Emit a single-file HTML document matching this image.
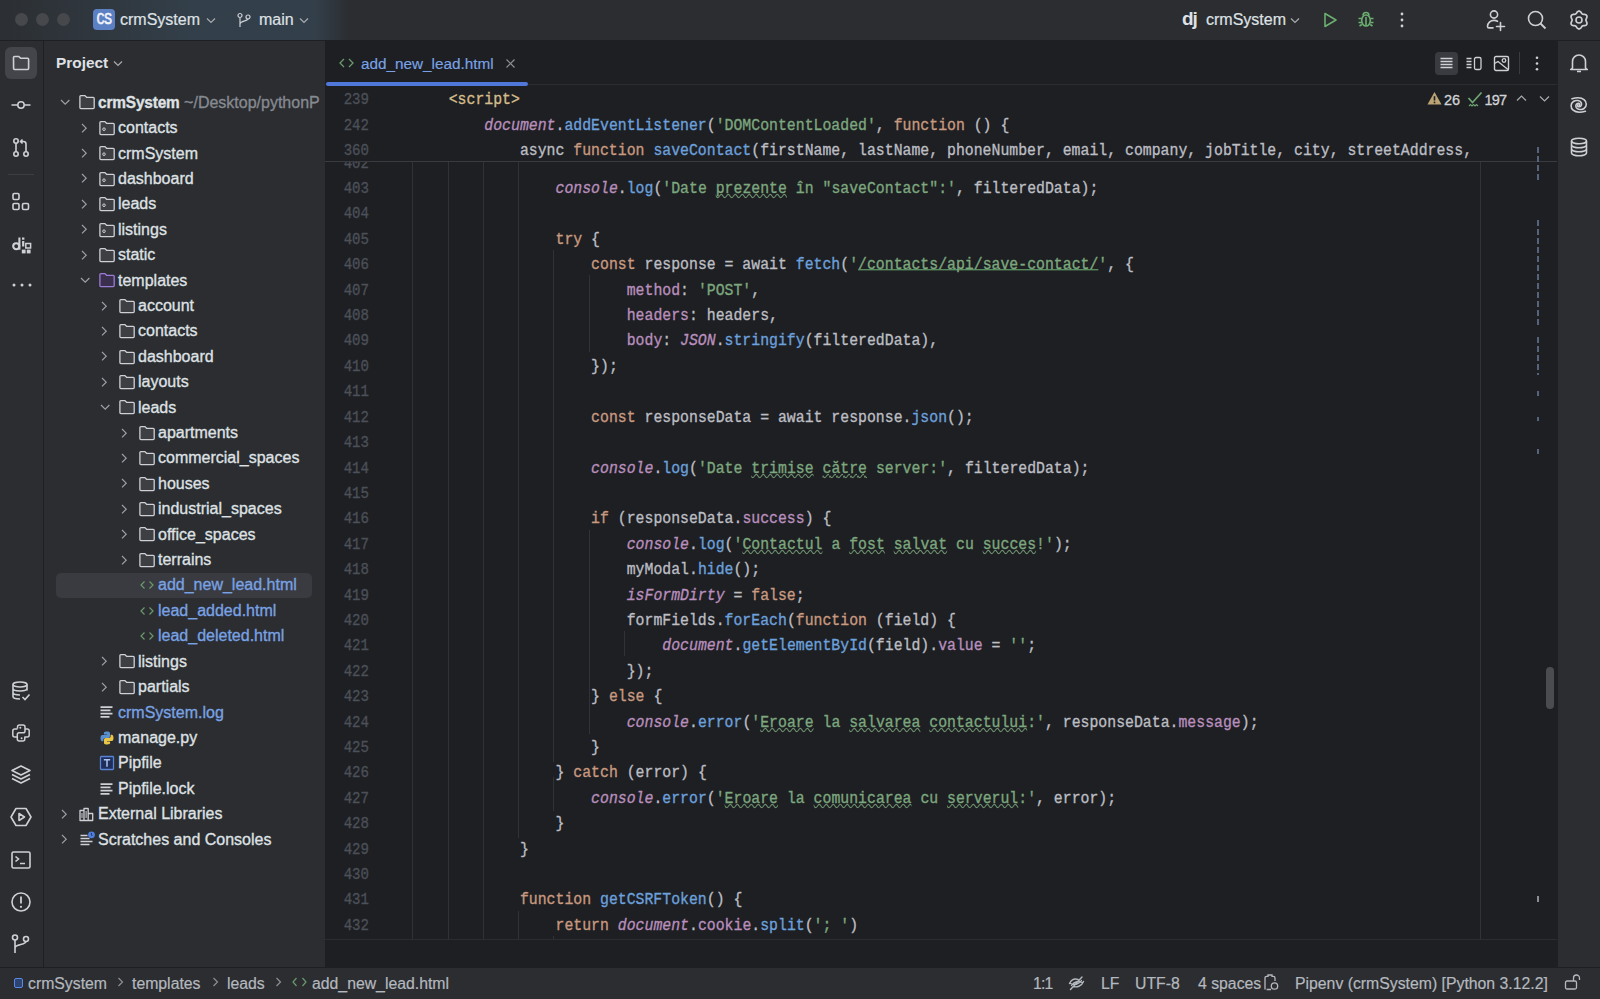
<!DOCTYPE html>
<html><head><meta charset="utf-8">
<style>
*{box-sizing:border-box;margin:0;padding:0}
html,body{width:1600px;height:999px;overflow:hidden;background:#2B2D30}
body{position:relative;font-family:"Liberation Sans",sans-serif;color:#DFE1E5}
.abs{position:absolute}
svg{overflow:visible}
.tt{-webkit-text-stroke:0.2px currentColor}
#title{left:0;top:0;width:1600px;height:41px;background:#2B2D30;border-bottom:1px solid #1E1F22}
#titlegrad{left:0;top:0;width:360px;height:40px;background:linear-gradient(90deg, rgba(58,80,98,0.05) 0px, rgba(58,80,98,0.5) 190px, rgba(58,80,98,0.52) 315px, rgba(58,80,98,0.0) 350px)}
#lstrip{left:0;top:41px;width:44px;height:926px;background:#2B2D30;border-right:1px solid #1E1F22}
#proj{left:44px;top:41px;width:281px;height:926px;background:#2B2D30}
#editor{left:325px;top:41px;width:1232px;height:926px;background:#1E1F22}
#rstrip{left:1557px;top:41px;width:43px;height:926px;background:#2B2D30;border-left:1px solid #1E1F22}
#status{left:0;top:967px;width:1600px;height:32px;background:#2B2D30;border-top:1px solid #1E1F22}
.code{font-family:"Liberation Mono",monospace;font-size:14.83px;white-space:pre;color:#BCBEC4;line-height:25.41px;height:25.41px;-webkit-text-stroke:0.3px currentColor;transform:scaleY(1.07);transform-origin:0 50%}
.ln{font-family:"Liberation Mono",monospace;font-size:14.83px;color:#4B5059;position:absolute;width:40px;text-align:right;line-height:25.41px;-webkit-text-stroke:0.3px currentColor;transform:scale(0.95,1.07);transform-origin:100% 50%}
.k{color:#C99A80}.s{color:#7DA87F}.f{color:#6CA1DE}.p{color:#B98FBE}.g{color:#B98FBE;font-style:italic}.t{color:#D4BD8C}
.sq{text-decoration:underline wavy #6E9270;text-decoration-thickness:1px;text-underline-offset:-0.4px;text-decoration-skip-ink:none}
.ul{text-decoration:underline;text-decoration-color:#6AAB73;text-underline-offset:0px;text-decoration-skip-ink:none}
.tr{position:absolute;font-size:16px;line-height:25.41px;white-space:nowrap;color:#DFE1E5;-webkit-text-stroke:0.32px currentColor;transform:scaleY(1.08);transform-origin:0 60%}
.tr b{font-size:15.4px;letter-spacing:-0.15px}
.guide{position:absolute;width:1px;background:#303236}
</style></head><body>
<div id="title" class="abs"></div>
<div id="titlegrad" class="abs"></div>
<div id="lstrip" class="abs"></div>
<div id="proj" class="abs"></div>
<div id="editor" class="abs"></div>
<div id="rstrip" class="abs"></div>
<div id="status" class="abs"></div>
<div class="abs" style="left:325px;top:86px;width:1232px;height:853px;overflow:hidden">
<div class="guide" style="left:87.0px;top:76px;height:777px"></div>
<div class="guide" style="left:122.5px;top:76px;height:777px"></div>
<div class="guide" style="left:158.2px;top:76px;height:777px"></div>
<div class="guide" style="left:192.6px;top:76px;height:676px"></div>
<div class="guide" style="left:192.6px;top:825px;height:28px"></div>
<div class="guide" style="left:228.2px;top:164px;height:512px"></div>
<div class="guide" style="left:228.2px;top:691px;height:34px"></div>
<div class="guide" style="left:263.8px;top:189px;height:77px"></div>
<div class="guide" style="left:263.8px;top:444px;height:204px"></div>
<div class="guide" style="left:299.4px;top:545px;height:25px"></div>
<div class="guide" style="left:228.2px;top:850px;height:3px"></div>
<div class="guide" style="left:1155px;top:76px;height:777px;background:#313336"></div>
<div class="ln" style="left:4px;top:65.59px">402</div>
<div class="ln" style="left:4px;top:91.00px">403</div>
<div class="code abs" style="left:230.50px;top:91.00px"><span class="g">console</span>.<span class="f">log</span>(<span class="s">&#x27;Date <span class="sq">prezente</span> în &quot;saveContact&quot;:&#x27;</span>, filteredData);</div>
<div class="ln" style="left:4px;top:116.41px">404</div>
<div class="ln" style="left:4px;top:141.82px">405</div>
<div class="code abs" style="left:230.50px;top:141.82px"><span class="k">try</span> {</div>
<div class="ln" style="left:4px;top:167.23px">406</div>
<div class="code abs" style="left:266.10px;top:167.23px"><span class="k">const</span> response = await <span class="f">fetch</span>(<span class="s">&#x27;<span class="ul">/contacts/api/save-contact/</span>&#x27;</span>, {</div>
<div class="ln" style="left:4px;top:192.64px">407</div>
<div class="code abs" style="left:301.70px;top:192.64px"><span class="p">method</span>: <span class="s">&#x27;POST&#x27;</span>,</div>
<div class="ln" style="left:4px;top:218.05px">408</div>
<div class="code abs" style="left:301.70px;top:218.05px"><span class="p">headers</span>: headers,</div>
<div class="ln" style="left:4px;top:243.46px">409</div>
<div class="code abs" style="left:301.70px;top:243.46px"><span class="p">body</span>: <span class="g">JSON</span>.<span class="f">stringify</span>(filteredData),</div>
<div class="ln" style="left:4px;top:268.87px">410</div>
<div class="code abs" style="left:266.10px;top:268.87px">});</div>
<div class="ln" style="left:4px;top:294.28px">411</div>
<div class="ln" style="left:4px;top:319.69px">412</div>
<div class="code abs" style="left:266.10px;top:319.69px"><span class="k">const</span> responseData = await response.<span class="f">json</span>();</div>
<div class="ln" style="left:4px;top:345.10px">413</div>
<div class="ln" style="left:4px;top:370.51px">414</div>
<div class="code abs" style="left:266.10px;top:370.51px"><span class="g">console</span>.<span class="f">log</span>(<span class="s">&#x27;Date <span class="sq">trimise</span> <span class="sq">către</span> server:&#x27;</span>, filteredData);</div>
<div class="ln" style="left:4px;top:395.92px">415</div>
<div class="ln" style="left:4px;top:421.33px">416</div>
<div class="code abs" style="left:266.10px;top:421.33px"><span class="k">if</span> (responseData.<span class="p">success</span>) {</div>
<div class="ln" style="left:4px;top:446.74px">417</div>
<div class="code abs" style="left:301.70px;top:446.74px"><span class="g">console</span>.<span class="f">log</span>(<span class="s">&#x27;<span class="sq">Contactul</span> a <span class="sq">fost</span> <span class="sq">salvat</span> cu <span class="sq">succes</span>!&#x27;</span>);</div>
<div class="ln" style="left:4px;top:472.15px">418</div>
<div class="code abs" style="left:301.70px;top:472.15px">myModal.<span class="f">hide</span>();</div>
<div class="ln" style="left:4px;top:497.56px">419</div>
<div class="code abs" style="left:301.70px;top:497.56px"><span class="g">isFormDirty</span> = <span class="k">false</span>;</div>
<div class="ln" style="left:4px;top:522.97px">420</div>
<div class="code abs" style="left:301.70px;top:522.97px">formFields.<span class="f">forEach</span>(<span class="k">function</span> (field) {</div>
<div class="ln" style="left:4px;top:548.38px">421</div>
<div class="code abs" style="left:337.30px;top:548.38px"><span class="g">document</span>.<span class="f">getElementById</span>(field).<span class="p">value</span> = <span class="s">&#x27;&#x27;</span>;</div>
<div class="ln" style="left:4px;top:573.79px">422</div>
<div class="code abs" style="left:301.70px;top:573.79px">});</div>
<div class="ln" style="left:4px;top:599.20px">423</div>
<div class="code abs" style="left:266.10px;top:599.20px">} <span class="k">else</span> {</div>
<div class="ln" style="left:4px;top:624.61px">424</div>
<div class="code abs" style="left:301.70px;top:624.61px"><span class="g">console</span>.<span class="f">error</span>(<span class="s">&#x27;<span class="sq">Eroare</span> la <span class="sq">salvarea</span> <span class="sq">contactului</span>:&#x27;</span>, responseData.<span class="p">message</span>);</div>
<div class="ln" style="left:4px;top:650.02px">425</div>
<div class="code abs" style="left:266.10px;top:650.02px">}</div>
<div class="ln" style="left:4px;top:675.43px">426</div>
<div class="code abs" style="left:230.50px;top:675.43px">} <span class="k">catch</span> (error) {</div>
<div class="ln" style="left:4px;top:700.84px">427</div>
<div class="code abs" style="left:266.10px;top:700.84px"><span class="g">console</span>.<span class="f">error</span>(<span class="s">&#x27;<span class="sq">Eroare</span> la <span class="sq">comunicarea</span> cu <span class="sq">serverul</span>:&#x27;</span>, error);</div>
<div class="ln" style="left:4px;top:726.25px">428</div>
<div class="code abs" style="left:230.50px;top:726.25px">}</div>
<div class="ln" style="left:4px;top:751.66px">429</div>
<div class="code abs" style="left:194.90px;top:751.66px">}</div>
<div class="ln" style="left:4px;top:777.07px">430</div>
<div class="ln" style="left:4px;top:802.48px">431</div>
<div class="code abs" style="left:194.90px;top:802.48px"><span class="k">function</span> <span class="f">getCSRFToken</span>() {</div>
<div class="ln" style="left:4px;top:827.89px">432</div>
<div class="code abs" style="left:230.50px;top:827.89px"><span class="k">return</span> <span class="g">document</span>.<span class="p">cookie</span>.<span class="f">split</span>(<span class="s">&#x27;; &#x27;</span>)</div>
<div class="ln" style="left:4px;top:853.30px">433</div>
<div class="abs" style="left:0;top:0;width:1232px;height:76px;background:#1E1F22;border-bottom:1px solid #393B40"></div>
<div class="ln" style="left:4px;top:2.20px">239</div>
<div class="code abs" style="left:123.70px;top:2.20px"><span class="t">&lt;script&gt;</span></div>
<div class="ln" style="left:4px;top:27.61px">242</div>
<div class="code abs" style="left:159.30px;top:27.61px"><span class="g">document</span>.<span class="f">addEventListener</span>(<span class="s">&#x27;DOMContentLoaded&#x27;</span>, <span class="k">function</span> () {</div>
<div class="ln" style="left:4px;top:53.02px">360</div>
<div class="code abs" style="left:194.90px;top:53.02px">async <span class="k">function</span> <span class="f">saveContact</span>(firstName, lastName, phoneNumber, email, company, jobTitle, city, streetAddress,</div>
</div>
<div class="abs" style="left:56px;top:572.5px;width:256px;height:25px;border-radius:5px;background:#393B40"></div>
<svg class="abs" style="left:59.5px;top:98.9px" width="11" height="7" viewBox="0 0 11 7"><path d="M1 1l4.2 4.2L9.4 1" fill="none" stroke="#9DA0A8" stroke-width="1.2"/></svg>
<svg class="abs" style="left:79px;top:94.4px" width="16" height="16" viewBox="0 0 16 16"><path d="M0.9 2.6c0-.6.4-1 1-1h4l1.7 1.7h6.6c.6 0 1 .4 1 1v9.3c0 .6-.4 1-1 1H1.9c-.6 0-1-.4-1-1z" fill="#3D3F43" stroke="#CED0D6" stroke-width="1.3"/></svg>
<div class="tr" style="left:98px;top:89.70px"><b>crmSystem</b><span style="color:#868A91"> ~/Desktop/pythonP</span></div>
<svg class="abs" style="left:81px;top:122.6px" width="7" height="11" viewBox="0 0 7 11"><path d="M1 1l4.2 4.2L1 9.4" fill="none" stroke="#9DA0A8" stroke-width="1.2"/></svg>
<svg class="abs" style="left:99px;top:119.8px" width="16" height="16" viewBox="0 0 16 16"><path d="M0.9 2.6c0-.6.4-1 1-1h4l1.7 1.7h6.6c.6 0 1 .4 1 1v9.3c0 .6-.4 1-1 1H1.9c-.6 0-1-.4-1-1z" fill="#3D3F43" stroke="#CED0D6" stroke-width="1.3"/><circle cx="5" cy="9.2" r="1.3" fill="none" stroke="#CED0D6" stroke-width="1"/></svg>
<div class="tr" style="left:118px;top:115.11px">contacts</div>
<svg class="abs" style="left:81px;top:148.0px" width="7" height="11" viewBox="0 0 7 11"><path d="M1 1l4.2 4.2L1 9.4" fill="none" stroke="#9DA0A8" stroke-width="1.2"/></svg>
<svg class="abs" style="left:99px;top:145.2px" width="16" height="16" viewBox="0 0 16 16"><path d="M0.9 2.6c0-.6.4-1 1-1h4l1.7 1.7h6.6c.6 0 1 .4 1 1v9.3c0 .6-.4 1-1 1H1.9c-.6 0-1-.4-1-1z" fill="#3D3F43" stroke="#CED0D6" stroke-width="1.3"/><circle cx="5" cy="9.2" r="1.3" fill="none" stroke="#CED0D6" stroke-width="1"/></svg>
<div class="tr" style="left:118px;top:140.52px">crmSystem</div>
<svg class="abs" style="left:81px;top:173.4px" width="7" height="11" viewBox="0 0 7 11"><path d="M1 1l4.2 4.2L1 9.4" fill="none" stroke="#9DA0A8" stroke-width="1.2"/></svg>
<svg class="abs" style="left:99px;top:170.6px" width="16" height="16" viewBox="0 0 16 16"><path d="M0.9 2.6c0-.6.4-1 1-1h4l1.7 1.7h6.6c.6 0 1 .4 1 1v9.3c0 .6-.4 1-1 1H1.9c-.6 0-1-.4-1-1z" fill="#3D3F43" stroke="#CED0D6" stroke-width="1.3"/><circle cx="5" cy="9.2" r="1.3" fill="none" stroke="#CED0D6" stroke-width="1"/></svg>
<div class="tr" style="left:118px;top:165.93px">dashboard</div>
<svg class="abs" style="left:81px;top:198.8px" width="7" height="11" viewBox="0 0 7 11"><path d="M1 1l4.2 4.2L1 9.4" fill="none" stroke="#9DA0A8" stroke-width="1.2"/></svg>
<svg class="abs" style="left:99px;top:196.0px" width="16" height="16" viewBox="0 0 16 16"><path d="M0.9 2.6c0-.6.4-1 1-1h4l1.7 1.7h6.6c.6 0 1 .4 1 1v9.3c0 .6-.4 1-1 1H1.9c-.6 0-1-.4-1-1z" fill="#3D3F43" stroke="#CED0D6" stroke-width="1.3"/><circle cx="5" cy="9.2" r="1.3" fill="none" stroke="#CED0D6" stroke-width="1"/></svg>
<div class="tr" style="left:118px;top:191.34px">leads</div>
<svg class="abs" style="left:81px;top:224.3px" width="7" height="11" viewBox="0 0 7 11"><path d="M1 1l4.2 4.2L1 9.4" fill="none" stroke="#9DA0A8" stroke-width="1.2"/></svg>
<svg class="abs" style="left:99px;top:221.5px" width="16" height="16" viewBox="0 0 16 16"><path d="M0.9 2.6c0-.6.4-1 1-1h4l1.7 1.7h6.6c.6 0 1 .4 1 1v9.3c0 .6-.4 1-1 1H1.9c-.6 0-1-.4-1-1z" fill="#3D3F43" stroke="#CED0D6" stroke-width="1.3"/><circle cx="5" cy="9.2" r="1.3" fill="none" stroke="#CED0D6" stroke-width="1"/></svg>
<div class="tr" style="left:118px;top:216.75px">listings</div>
<svg class="abs" style="left:81px;top:249.7px" width="7" height="11" viewBox="0 0 7 11"><path d="M1 1l4.2 4.2L1 9.4" fill="none" stroke="#9DA0A8" stroke-width="1.2"/></svg>
<svg class="abs" style="left:99px;top:246.9px" width="16" height="16" viewBox="0 0 16 16"><path d="M0.9 2.6c0-.6.4-1 1-1h4l1.7 1.7h6.6c.6 0 1 .4 1 1v9.3c0 .6-.4 1-1 1H1.9c-.6 0-1-.4-1-1z" fill="#3D3F43" stroke="#CED0D6" stroke-width="1.3"/></svg>
<div class="tr" style="left:118px;top:242.16px">static</div>
<svg class="abs" style="left:79.5px;top:276.8px" width="11" height="7" viewBox="0 0 11 7"><path d="M1 1l4.2 4.2L9.4 1" fill="none" stroke="#9DA0A8" stroke-width="1.2"/></svg>
<svg class="abs" style="left:99px;top:272.3px" width="16" height="16" viewBox="0 0 16 16"><path d="M0.9 2.6c0-.6.4-1 1-1h4l1.7 1.7h6.6c.6 0 1 .4 1 1v9.3c0 .6-.4 1-1 1H1.9c-.6 0-1-.4-1-1z" fill="#3A2F4D" stroke="#9D7BD8" stroke-width="1.3"/></svg>
<div class="tr" style="left:118px;top:267.57px">templates</div>
<svg class="abs" style="left:101px;top:300.5px" width="7" height="11" viewBox="0 0 7 11"><path d="M1 1l4.2 4.2L1 9.4" fill="none" stroke="#9DA0A8" stroke-width="1.2"/></svg>
<svg class="abs" style="left:119px;top:297.7px" width="16" height="16" viewBox="0 0 16 16"><path d="M0.9 2.6c0-.6.4-1 1-1h4l1.7 1.7h6.6c.6 0 1 .4 1 1v9.3c0 .6-.4 1-1 1H1.9c-.6 0-1-.4-1-1z" fill="#3D3F43" stroke="#CED0D6" stroke-width="1.3"/></svg>
<div class="tr" style="left:138px;top:292.98px">account</div>
<svg class="abs" style="left:101px;top:325.9px" width="7" height="11" viewBox="0 0 7 11"><path d="M1 1l4.2 4.2L1 9.4" fill="none" stroke="#9DA0A8" stroke-width="1.2"/></svg>
<svg class="abs" style="left:119px;top:323.1px" width="16" height="16" viewBox="0 0 16 16"><path d="M0.9 2.6c0-.6.4-1 1-1h4l1.7 1.7h6.6c.6 0 1 .4 1 1v9.3c0 .6-.4 1-1 1H1.9c-.6 0-1-.4-1-1z" fill="#3D3F43" stroke="#CED0D6" stroke-width="1.3"/></svg>
<div class="tr" style="left:138px;top:318.39px">contacts</div>
<svg class="abs" style="left:101px;top:351.3px" width="7" height="11" viewBox="0 0 7 11"><path d="M1 1l4.2 4.2L1 9.4" fill="none" stroke="#9DA0A8" stroke-width="1.2"/></svg>
<svg class="abs" style="left:119px;top:348.5px" width="16" height="16" viewBox="0 0 16 16"><path d="M0.9 2.6c0-.6.4-1 1-1h4l1.7 1.7h6.6c.6 0 1 .4 1 1v9.3c0 .6-.4 1-1 1H1.9c-.6 0-1-.4-1-1z" fill="#3D3F43" stroke="#CED0D6" stroke-width="1.3"/></svg>
<div class="tr" style="left:138px;top:343.80px">dashboard</div>
<svg class="abs" style="left:101px;top:376.7px" width="7" height="11" viewBox="0 0 7 11"><path d="M1 1l4.2 4.2L1 9.4" fill="none" stroke="#9DA0A8" stroke-width="1.2"/></svg>
<svg class="abs" style="left:119px;top:373.9px" width="16" height="16" viewBox="0 0 16 16"><path d="M0.9 2.6c0-.6.4-1 1-1h4l1.7 1.7h6.6c.6 0 1 .4 1 1v9.3c0 .6-.4 1-1 1H1.9c-.6 0-1-.4-1-1z" fill="#3D3F43" stroke="#CED0D6" stroke-width="1.3"/></svg>
<div class="tr" style="left:138px;top:369.21px">layouts</div>
<svg class="abs" style="left:99.5px;top:403.8px" width="11" height="7" viewBox="0 0 11 7"><path d="M1 1l4.2 4.2L9.4 1" fill="none" stroke="#9DA0A8" stroke-width="1.2"/></svg>
<svg class="abs" style="left:119px;top:399.3px" width="16" height="16" viewBox="0 0 16 16"><path d="M0.9 2.6c0-.6.4-1 1-1h4l1.7 1.7h6.6c.6 0 1 .4 1 1v9.3c0 .6-.4 1-1 1H1.9c-.6 0-1-.4-1-1z" fill="#3D3F43" stroke="#CED0D6" stroke-width="1.3"/></svg>
<div class="tr" style="left:138px;top:394.62px">leads</div>
<svg class="abs" style="left:121px;top:427.5px" width="7" height="11" viewBox="0 0 7 11"><path d="M1 1l4.2 4.2L1 9.4" fill="none" stroke="#9DA0A8" stroke-width="1.2"/></svg>
<svg class="abs" style="left:139px;top:424.7px" width="16" height="16" viewBox="0 0 16 16"><path d="M0.9 2.6c0-.6.4-1 1-1h4l1.7 1.7h6.6c.6 0 1 .4 1 1v9.3c0 .6-.4 1-1 1H1.9c-.6 0-1-.4-1-1z" fill="#3D3F43" stroke="#CED0D6" stroke-width="1.3"/></svg>
<div class="tr" style="left:158px;top:420.03px">apartments</div>
<svg class="abs" style="left:121px;top:452.9px" width="7" height="11" viewBox="0 0 7 11"><path d="M1 1l4.2 4.2L1 9.4" fill="none" stroke="#9DA0A8" stroke-width="1.2"/></svg>
<svg class="abs" style="left:139px;top:450.1px" width="16" height="16" viewBox="0 0 16 16"><path d="M0.9 2.6c0-.6.4-1 1-1h4l1.7 1.7h6.6c.6 0 1 .4 1 1v9.3c0 .6-.4 1-1 1H1.9c-.6 0-1-.4-1-1z" fill="#3D3F43" stroke="#CED0D6" stroke-width="1.3"/></svg>
<div class="tr" style="left:158px;top:445.44px">commercial_spaces</div>
<svg class="abs" style="left:121px;top:478.4px" width="7" height="11" viewBox="0 0 7 11"><path d="M1 1l4.2 4.2L1 9.4" fill="none" stroke="#9DA0A8" stroke-width="1.2"/></svg>
<svg class="abs" style="left:139px;top:475.6px" width="16" height="16" viewBox="0 0 16 16"><path d="M0.9 2.6c0-.6.4-1 1-1h4l1.7 1.7h6.6c.6 0 1 .4 1 1v9.3c0 .6-.4 1-1 1H1.9c-.6 0-1-.4-1-1z" fill="#3D3F43" stroke="#CED0D6" stroke-width="1.3"/></svg>
<div class="tr" style="left:158px;top:470.85px">houses</div>
<svg class="abs" style="left:121px;top:503.8px" width="7" height="11" viewBox="0 0 7 11"><path d="M1 1l4.2 4.2L1 9.4" fill="none" stroke="#9DA0A8" stroke-width="1.2"/></svg>
<svg class="abs" style="left:139px;top:501.0px" width="16" height="16" viewBox="0 0 16 16"><path d="M0.9 2.6c0-.6.4-1 1-1h4l1.7 1.7h6.6c.6 0 1 .4 1 1v9.3c0 .6-.4 1-1 1H1.9c-.6 0-1-.4-1-1z" fill="#3D3F43" stroke="#CED0D6" stroke-width="1.3"/></svg>
<div class="tr" style="left:158px;top:496.26px">industrial_spaces</div>
<svg class="abs" style="left:121px;top:529.2px" width="7" height="11" viewBox="0 0 7 11"><path d="M1 1l4.2 4.2L1 9.4" fill="none" stroke="#9DA0A8" stroke-width="1.2"/></svg>
<svg class="abs" style="left:139px;top:526.4px" width="16" height="16" viewBox="0 0 16 16"><path d="M0.9 2.6c0-.6.4-1 1-1h4l1.7 1.7h6.6c.6 0 1 .4 1 1v9.3c0 .6-.4 1-1 1H1.9c-.6 0-1-.4-1-1z" fill="#3D3F43" stroke="#CED0D6" stroke-width="1.3"/></svg>
<div class="tr" style="left:158px;top:521.67px">office_spaces</div>
<svg class="abs" style="left:121px;top:554.6px" width="7" height="11" viewBox="0 0 7 11"><path d="M1 1l4.2 4.2L1 9.4" fill="none" stroke="#9DA0A8" stroke-width="1.2"/></svg>
<svg class="abs" style="left:139px;top:551.8px" width="16" height="16" viewBox="0 0 16 16"><path d="M0.9 2.6c0-.6.4-1 1-1h4l1.7 1.7h6.6c.6 0 1 .4 1 1v9.3c0 .6-.4 1-1 1H1.9c-.6 0-1-.4-1-1z" fill="#3D3F43" stroke="#CED0D6" stroke-width="1.3"/></svg>
<div class="tr" style="left:158px;top:547.08px">terrains</div>
<svg class="abs" style="left:139px;top:577.2px" width="16" height="16" viewBox="0 0 16 16"><path d="M5.5 4.5L2 8l3.5 3.5M10.5 4.5L14 8l-3.5 3.5" fill="none" stroke="#6A9A6E" stroke-width="1.2"/></svg>
<div class="tr" style="left:158px;top:572.49px"><span style="color:#79A2E4">add_new_lead.html</span></div>
<svg class="abs" style="left:139px;top:602.6px" width="16" height="16" viewBox="0 0 16 16"><path d="M5.5 4.5L2 8l3.5 3.5M10.5 4.5L14 8l-3.5 3.5" fill="none" stroke="#6A9A6E" stroke-width="1.2"/></svg>
<div class="tr" style="left:158px;top:597.90px"><span style="color:#79A2E4">lead_added.html</span></div>
<svg class="abs" style="left:139px;top:628.0px" width="16" height="16" viewBox="0 0 16 16"><path d="M5.5 4.5L2 8l3.5 3.5M10.5 4.5L14 8l-3.5 3.5" fill="none" stroke="#6A9A6E" stroke-width="1.2"/></svg>
<div class="tr" style="left:158px;top:623.31px"><span style="color:#79A2E4">lead_deleted.html</span></div>
<svg class="abs" style="left:101px;top:656.2px" width="7" height="11" viewBox="0 0 7 11"><path d="M1 1l4.2 4.2L1 9.4" fill="none" stroke="#9DA0A8" stroke-width="1.2"/></svg>
<svg class="abs" style="left:119px;top:653.4px" width="16" height="16" viewBox="0 0 16 16"><path d="M0.9 2.6c0-.6.4-1 1-1h4l1.7 1.7h6.6c.6 0 1 .4 1 1v9.3c0 .6-.4 1-1 1H1.9c-.6 0-1-.4-1-1z" fill="#3D3F43" stroke="#CED0D6" stroke-width="1.3"/></svg>
<div class="tr" style="left:138px;top:648.72px">listings</div>
<svg class="abs" style="left:101px;top:681.6px" width="7" height="11" viewBox="0 0 7 11"><path d="M1 1l4.2 4.2L1 9.4" fill="none" stroke="#9DA0A8" stroke-width="1.2"/></svg>
<svg class="abs" style="left:119px;top:678.8px" width="16" height="16" viewBox="0 0 16 16"><path d="M0.9 2.6c0-.6.4-1 1-1h4l1.7 1.7h6.6c.6 0 1 .4 1 1v9.3c0 .6-.4 1-1 1H1.9c-.6 0-1-.4-1-1z" fill="#3D3F43" stroke="#CED0D6" stroke-width="1.3"/></svg>
<div class="tr" style="left:138px;top:674.13px">partials</div>
<svg class="abs" style="left:99px;top:704.2px" width="16" height="16" viewBox="0 0 16 16"><path d="M1.5 3.2h12M1.5 6.4h10M1.5 9.6h12M1.5 12.8h9" stroke="#CED0D6" stroke-width="1.7"/></svg>
<div class="tr" style="left:118px;top:699.54px"><span style="color:#79A2E4">crmSystem.log</span></div>
<svg class="abs" style="left:99px;top:729.7px" width="16" height="16" viewBox="0 0 16 16"><path d="M7.9 1.5c-3.2 0-3 1.4-3 1.4v1.5h3.1v.5H3.6S1.5 4.6 1.5 8s1.8 3.2 1.8 3.2h1.1V9.7s-.1-1.8 1.8-1.8h3.1s1.7 0 1.7-1.7V3.3S11.3 1.5 7.9 1.5z" fill="#5A8FD0"/><path d="M8.1 14.5c3.2 0 3-1.4 3-1.4v-1.5H8v-.5h4.4s2.1.2 2.1-3.1-1.8-3.2-1.8-3.2h-1.1v1.5s.1 1.8-1.8 1.8H6.7S5 8.1 5 9.8v2.9s-.3 1.8 3.1 1.8z" fill="#E8C547"/></svg>
<div class="tr" style="left:118px;top:724.95px">manage.py</div>
<svg class="abs" style="left:99px;top:755.1px" width="16" height="16" viewBox="0 0 16 16"><rect x="1.5" y="1.5" width="13" height="13" rx="0.8" fill="#1E2D5A" stroke="#5A82D4" stroke-width="1.3"/><path d="M4.8 4.8h6.4M8 4.8v7" stroke="#A9C2F0" stroke-width="1.5"/></svg>
<div class="tr" style="left:118px;top:750.36px">Pipfile</div>
<svg class="abs" style="left:99px;top:780.5px" width="16" height="16" viewBox="0 0 16 16"><path d="M1.5 3.2h12M1.5 6.4h10M1.5 9.6h12M1.5 12.8h9" stroke="#CED0D6" stroke-width="1.7"/></svg>
<div class="tr" style="left:118px;top:775.77px">Pipfile.lock</div>
<svg class="abs" style="left:61px;top:808.7px" width="7" height="11" viewBox="0 0 7 11"><path d="M1 1l4.2 4.2L1 9.4" fill="none" stroke="#9DA0A8" stroke-width="1.2"/></svg>
<svg class="abs" style="left:79px;top:805.9px" width="16" height="16" viewBox="0 0 16 16"><path d="M1 14.5V4.5h4v10zM5 14.5V2.5h4.2v12zM9.2 14.5V7.5h4.5v7z" fill="none" stroke="#CED0D6" stroke-width="1.3" stroke-linejoin="round"/><path d="M3 7v5M7.1 5v7" stroke="#CED0D6" stroke-width="1"/></svg>
<div class="tr" style="left:98px;top:801.18px">External Libraries</div>
<svg class="abs" style="left:61px;top:834.1px" width="7" height="11" viewBox="0 0 7 11"><path d="M1 1l4.2 4.2L1 9.4" fill="none" stroke="#9DA0A8" stroke-width="1.2"/></svg>
<svg class="abs" style="left:79px;top:831.3px" width="16" height="16" viewBox="0 0 16 16"><path d="M1.5 4.5h7M1.5 7.5h9M1.5 10.5h12M1.5 13.5h9" stroke="#CED0D6" stroke-width="1.6"/><circle cx="12.5" cy="3.8" r="3.4" fill="#4E7FDF"/><path d="M12.4 2v2l1 1" stroke="#1E2D5A" stroke-width="0.9" fill="none"/></svg>
<div class="tr" style="left:98px;top:826.59px">Scratches and Consoles</div>
<div class="abs" style="left:14.5px;top:13px;width:13px;height:13px;border-radius:50%;background:#46484C"></div>
<div class="abs" style="left:35.5px;top:13px;width:13px;height:13px;border-radius:50%;background:#46484C"></div>
<div class="abs" style="left:56.5px;top:13px;width:13px;height:13px;border-radius:50%;background:#46484C"></div>
<div class="abs" style="left:93px;top:9px;width:22px;height:21px;border-radius:4px;background:#5B80C4;color:#F2F4F8;font-family:Liberation Mono,monospace;font-size:13.5px;line-height:21px;text-align:center;letter-spacing:-0.6px"><span style="display:inline-block;transform:scaleY(1.18);-webkit-text-stroke:0.5px currentColor">CS</span></div>
<div class="abs tt" style="left:120px;top:9px;font-size:16px;line-height:22px;color:#DFE1E5">crmSystem</div>
<svg class="abs" style="left:206px;top:17px" width="10" height="7" viewBox="0 0 10 7"><path d="M1 1.5l4 4 4-4" fill="none" stroke="#A8ABB0" stroke-width="1.2"/></svg>
<svg class="abs" style="left:236px;top:12px" width="16" height="16" viewBox="0 0 16 16"><circle cx="4" cy="3.5" r="2" fill="none" stroke="#CED0D6" stroke-width="1.2"/><circle cx="12" cy="5" r="2" fill="none" stroke="#CED0D6" stroke-width="1.2"/><path d="M4 5.5V15M4 12c0-3 8-3 8-5" fill="none" stroke="#CED0D6" stroke-width="1.2"/></svg>
<div class="abs tt" style="left:259px;top:9px;font-size:16px;line-height:22px;color:#DFE1E5">main</div>
<svg class="abs" style="left:299px;top:17px" width="10" height="7" viewBox="0 0 10 7"><path d="M1 1.5l4 4 4-4" fill="none" stroke="#A8ABB0" stroke-width="1.2"/></svg>
<div class="abs" style="left:1182px;top:7px;font-size:19px;line-height:24px;font-weight:bold;color:#DFE1E5;letter-spacing:-1.2px">dj</div>
<div class="abs tt" style="left:1206px;top:9px;font-size:16px;line-height:22px;color:#DFE1E5">crmSystem</div>
<svg class="abs" style="left:1290px;top:17px" width="10" height="7" viewBox="0 0 10 7"><path d="M1 1.5l4 4 4-4" fill="none" stroke="#A8ABB0" stroke-width="1.2"/></svg>
<svg class="abs" style="left:1321px;top:11px" width="18" height="18" viewBox="0 0 18 18"><path d="M4 2.5v13l11-6.5z" fill="none" stroke="#6BAF70" stroke-width="1.6" stroke-linejoin="round"/></svg>
<svg class="abs" style="left:1357px;top:10px" width="18" height="19" viewBox="0 0 18 19"><ellipse cx="9" cy="10.5" rx="4.3" ry="5.5" fill="none" stroke="#6BAF70" stroke-width="1.6"/><path d="M6 5.5c0-2 1.3-3 3-3s3 1 3 3M1.5 8.5h3M13.5 8.5h3M1.5 12.5h3M13.5 12.5h3M2.5 16l2.3-1.5M15.5 16l-2.3-1.5M9 7v9" fill="none" stroke="#6BAF70" stroke-width="1.6"/></svg>
<svg class="abs" style="left:1398px;top:11px" width="8" height="18" viewBox="0 0 8 18"><circle cx="4" cy="3" r="1.4" fill="#CED0D6"/><circle cx="4" cy="9" r="1.4" fill="#CED0D6"/><circle cx="4" cy="15" r="1.4" fill="#CED0D6"/></svg>
<svg class="abs" style="left:1484px;top:9px" width="22" height="22" viewBox="0 0 22 22"><circle cx="10" cy="5.5" r="3.6" fill="none" stroke="#CED0D6" stroke-width="1.6"/><path d="M13.5 12.3c-1-.6-2.2-.9-3.5-.9-3.6 0-6.5 2.5-6.5 6 0 1 .6 1.5 1.5 1.5H9M16.5 13.5v8M12.5 17.5h8" fill="none" stroke="#CED0D6" stroke-width="1.6" stroke-linecap="round"/></svg>
<svg class="abs" style="left:1526px;top:9px" width="22" height="22" viewBox="0 0 22 22"><circle cx="9.5" cy="9.5" r="7" fill="none" stroke="#CED0D6" stroke-width="1.6"/><path d="M14.5 14.5l5 5" stroke="#CED0D6" stroke-width="1.8"/></svg>
<svg class="abs" style="left:1568px;top:8.5px" width="22" height="22" viewBox="0 0 22 22"><path d="M17.90 11.00 L17.94 11.36 L18.05 11.74 L18.22 12.14 L18.43 12.58 L18.63 13.04 L18.81 13.54 L18.92 14.04 L18.96 14.54 L18.89 15.02 L18.71 15.45 L18.42 15.82 L18.05 16.12 L17.60 16.34 L17.10 16.49 L16.59 16.59 L16.08 16.64 L15.60 16.68 L15.17 16.74 L14.78 16.83 L14.45 16.98 L14.15 17.19 L13.88 17.48 L13.62 17.83 L13.35 18.22 L13.04 18.63 L12.71 19.03 L12.33 19.38 L11.91 19.66 L11.46 19.84 L11.00 19.90 L10.54 19.84 L10.09 19.66 L9.67 19.38 L9.29 19.03 L8.96 18.63 L8.65 18.22 L8.38 17.83 L8.12 17.48 L7.85 17.19 L7.55 16.98 L7.22 16.83 L6.83 16.74 L6.40 16.68 L5.92 16.64 L5.41 16.59 L4.90 16.49 L4.40 16.34 L3.95 16.12 L3.58 15.82 L3.29 15.45 L3.11 15.02 L3.04 14.54 L3.08 14.04 L3.19 13.54 L3.37 13.04 L3.57 12.58 L3.78 12.14 L3.95 11.74 L4.06 11.36 L4.10 11.00 L4.06 10.64 L3.95 10.26 L3.78 9.86 L3.57 9.42 L3.37 8.96 L3.19 8.46 L3.08 7.96 L3.04 7.46 L3.11 6.98 L3.29 6.55 L3.58 6.18 L3.95 5.88 L4.40 5.66 L4.90 5.51 L5.41 5.41 L5.92 5.36 L6.40 5.32 L6.83 5.26 L7.22 5.17 L7.55 5.02 L7.85 4.81 L8.12 4.52 L8.38 4.17 L8.65 3.78 L8.96 3.37 L9.29 2.97 L9.67 2.62 L10.09 2.34 L10.54 2.16 L11.00 2.10 L11.46 2.16 L11.91 2.34 L12.33 2.62 L12.71 2.97 L13.04 3.37 L13.35 3.78 L13.62 4.17 L13.88 4.52 L14.15 4.81 L14.45 5.02 L14.78 5.17 L15.17 5.26 L15.60 5.32 L16.08 5.36 L16.59 5.41 L17.10 5.51 L17.60 5.66 L18.05 5.88 L18.42 6.18 L18.71 6.55 L18.89 6.98 L18.96 7.46 L18.92 7.96 L18.81 8.46 L18.63 8.96 L18.43 9.42 L18.22 9.86 L18.05 10.26 L17.94 10.64Z" fill="none" stroke="#CED0D6" stroke-width="1.7" stroke-linejoin="round"/><circle cx="11" cy="11" r="3" fill="none" stroke="#CED0D6" stroke-width="1.6"/></svg>
<div class="abs" style="left:5px;top:47px;width:32px;height:32px;border-radius:6px;background:#43454A"></div>
<svg class="abs" style="left:11px;top:53px" width="20" height="20" viewBox="0 0 20 20"><path d="M2.5 4.5c0-.6.4-1 1-1h4.3l1.8 1.8h7c.6 0 1 .4 1 1v9.2c0 .6-.4 1-1 1h-13c-.6 0-1-.4-1-1z" fill="none" stroke="#CED0D6" stroke-width="1.6"/></svg>
<svg class="abs" style="left:10px;top:95px" width="22" height="20" viewBox="0 0 22 20"><circle cx="11" cy="10" r="3.2" fill="none" stroke="#CED0D6" stroke-width="1.5"/><path d="M1.5 10h6.3M14.2 10h6.3" stroke="#CED0D6" stroke-width="1.5"/></svg>
<svg class="abs" style="left:11px;top:137px" width="20" height="22" viewBox="0 0 20 22"><circle cx="5" cy="4" r="2.2" fill="none" stroke="#CED0D6" stroke-width="1.6"/><circle cx="5" cy="17" r="2.2" fill="none" stroke="#CED0D6" stroke-width="1.6"/><circle cx="15" cy="17" r="2.2" fill="none" stroke="#CED0D6" stroke-width="1.6"/><path d="M5 6.2v8.6M15 14.8V7c0-1.5-1-2.5-2.5-2.5H9.5M11.5 2.5l-2 2 2 2" fill="none" stroke="#CED0D6" stroke-width="1.6"/></svg>
<div class="abs" style="left:8px;top:174px;width:26px;height:1px;background:#3C3E42"></div>
<svg class="abs" style="left:11px;top:192px" width="20" height="20" viewBox="0 0 20 20"><rect x="2" y="1.5" width="6" height="6" rx="1.2" fill="none" stroke="#CED0D6" stroke-width="1.6"/><rect x="2" y="11.5" width="6" height="6" rx="1.2" fill="none" stroke="#CED0D6" stroke-width="1.6"/><rect x="11.5" y="11.5" width="6" height="6" rx="1.2" fill="none" stroke="#CED0D6" stroke-width="1.6"/></svg>
<svg class="abs" style="left:11px;top:236px" width="22" height="20" viewBox="0 0 22 20"><circle cx="5.2" cy="10.2" r="3" fill="none" stroke="#CED0D6" stroke-width="2.1"/><path d="M8.4 1.5v12.2" stroke="#CED0D6" stroke-width="2.1"/><rect x="11" y="1.5" width="2.4" height="2.2" fill="#CED0D6"/><path d="M12.2 5v5.5" stroke="#CED0D6" stroke-width="2.2"/><rect x="14.8" y="7.5" width="4.8" height="4.5" fill="none" stroke="#CED0D6" stroke-width="1.5"/><rect x="10.8" y="13.6" width="3.8" height="3.8" fill="#CED0D6"/><rect x="15.8" y="13.6" width="3.8" height="3.8" fill="#CED0D6"/></svg>
<svg class="abs" style="left:11px;top:280px" width="22" height="10" viewBox="0 0 22 10"><circle cx="3" cy="5" r="1.5" fill="#CED0D6"/><circle cx="11" cy="5" r="1.5" fill="#CED0D6"/><circle cx="19" cy="5" r="1.5" fill="#CED0D6"/></svg>
<svg class="abs" style="left:10px;top:680px" width="22" height="22" viewBox="0 0 22 22"><ellipse cx="10" cy="4.5" rx="7" ry="2.5" fill="none" stroke="#CED0D6" stroke-width="1.6"/><path d="M3 4.5v12c0 1.4 3.1 2.5 7 2.5M17 4.5v6M3 8.5c0 1.4 3.1 2.5 7 2.5s7-1.1 7-2.5M3 12.5c0 1.4 3.1 2.5 7 2.5M12.5 17l2.5 2.5 4.5-5" fill="none" stroke="#CED0D6" stroke-width="1.6"/></svg>
<svg class="abs" style="left:12px;top:724px" width="18" height="18" viewBox="0 0 18 18"><path d="M5.5 4.5V3Q5.5 1 7.5 1H11Q13 1 13 3V5H15.3Q17.2 5 17.2 7V11Q17.2 13 15.3 13H12.8V15Q12.8 17 10.8 17H7.3Q5.3 17 5.3 15V13H2.8Q0.8 13 0.8 11V7Q0.8 5 2.8 5H5.5M13 5V7Q13 8.8 11.2 8.8H7.1Q5.3 8.8 5.3 10.6V13" fill="none" stroke="#CED0D6" stroke-width="1.5" stroke-linejoin="round"/><circle cx="8.3" cy="3.8" r="1" fill="#CED0D6"/><circle cx="9.6" cy="14.2" r="1" fill="#CED0D6"/></svg>
<svg class="abs" style="left:10px;top:764px" width="22" height="22" viewBox="0 0 22 22"><path d="M11 2l9 4.5-9 4.5-9-4.5z M2 10.5l9 4.5 9-4.5M2 14.5l9 4.5 9-4.5" fill="none" stroke="#CED0D6" stroke-width="1.6" stroke-linejoin="round"/></svg>
<svg class="abs" style="left:10px;top:806px" width="22" height="22" viewBox="0 0 22 22"><path d="M6 2.5h10l5 8.5-5 8.5H6L1 11z" fill="none" stroke="#CED0D6" stroke-width="1.6" stroke-linejoin="round"/><path d="M9 7.5v7l5.5-3.5z" fill="none" stroke="#CED0D6" stroke-width="1.6" stroke-linejoin="round"/></svg>
<svg class="abs" style="left:10px;top:849px" width="22" height="22" viewBox="0 0 22 22"><rect x="2" y="3" width="18" height="16" rx="1.5" fill="none" stroke="#CED0D6" stroke-width="1.6"/><path d="M5.5 7.5l3 2.5-3 2.5M10 14.5h5" fill="none" stroke="#CED0D6" stroke-width="1.6"/></svg>
<svg class="abs" style="left:10px;top:891px" width="22" height="22" viewBox="0 0 22 22"><circle cx="11" cy="11" r="9" fill="none" stroke="#CED0D6" stroke-width="1.6"/><path d="M11 5.5v7" stroke="#CED0D6" stroke-width="1.8"/><circle cx="11" cy="15.8" r="1.1" fill="#CED0D6"/></svg>
<svg class="abs" style="left:10px;top:933px" width="22" height="22" viewBox="0 0 22 22"><circle cx="5" cy="4.5" r="2.5" fill="none" stroke="#CED0D6" stroke-width="1.6"/><circle cx="16" cy="6" r="2.5" fill="none" stroke="#CED0D6" stroke-width="1.6"/><path d="M5 7v13M5 15c0-4 11-3 11-6.5" fill="none" stroke="#CED0D6" stroke-width="1.6"/></svg>
<svg class="abs" style="left:1568px;top:52px" width="22" height="22" viewBox="0 0 22 22"><path d="M4.5 16V9.5a6.5 6.5 0 0 1 13 0V16l1.8 1.5H2.7zM9 19.5h4" fill="none" stroke="#CED0D6" stroke-width="1.6" stroke-linejoin="round"/></svg>
<svg class="abs" style="left:1569px;top:96px" width="20" height="19" viewBox="0 0 20 19"><g fill="none" stroke="#CED0D6" stroke-width="1.6" stroke-linecap="round"><path d="M3 2.8C7 1.6 12.5 1.5 15.3 3.8C18 6 18 10.5 15 12.5C12.5 14.2 8.5 13.8 7.2 11.3C6.2 9.2 7.5 7 9.6 7.3C10.8 7.5 11.2 8.6 10.4 9.4"/><path d="M3 2.8C7 1.6 12.5 1.5 15.3 3.8C18 6 18 10.5 15 12.5C12.5 14.2 8.5 13.8 7.2 11.3C6.2 9.2 7.5 7 9.6 7.3C10.8 7.5 11.2 8.6 10.4 9.4" transform="rotate(180 9.7 9)"/></g></svg>
<svg class="abs" style="left:1568px;top:136px" width="22" height="22" viewBox="0 0 22 22"><ellipse cx="11" cy="5" rx="7.5" ry="2.8" fill="none" stroke="#CED0D6" stroke-width="1.6"/><path d="M3.5 5v12c0 1.5 3.4 2.8 7.5 2.8s7.5-1.3 7.5-2.8V5M3.5 9c0 1.5 3.4 2.8 7.5 2.8s7.5-1.3 7.5-2.8M3.5 13c0 1.5 3.4 2.8 7.5 2.8s7.5-1.3 7.5-2.8" fill="none" stroke="#CED0D6" stroke-width="1.6"/></svg>
<div class="abs" style="left:56px;top:52px;font-size:15.4px;line-height:22px;font-weight:bold;color:#DFE1E5">Project</div>
<svg class="abs" style="left:113px;top:60px" width="10" height="7" viewBox="0 0 10 7"><path d="M1 1.5l4 4 4-4" fill="none" stroke="#A8ABB0" stroke-width="1.2"/></svg>
<svg class="abs" style="left:338px;top:55px" width="17" height="16" viewBox="0 0 17 16"><path d="M6 4L2 8l4 4M11 4l4 4-4 4" fill="none" stroke="#6A9A6E" stroke-width="1.3"/></svg>
<div class="abs" style="left:361px;top:52.5px;font-size:15.3px;line-height:22px;color:#7AA3E6;-webkit-text-stroke:0.15px currentColor">add_new_lead.html</div>
<svg class="abs" style="left:505px;top:58px" width="11" height="11" viewBox="0 0 11 11"><path d="M1.5 1.5l8 8M9.5 1.5l-8 8" stroke="#8C8F94" stroke-width="1.2"/></svg>
<div class="abs" style="left:325px;top:84px;width:1232px;height:1px;background:#2B2D30"></div>
<div class="abs" style="left:326px;top:81.5px;width:202px;height:4px;border-radius:2px;background:#4F78DA"></div>
<div class="abs" style="left:1435px;top:52px;width:23px;height:23px;border-radius:4px;background:#393B40"></div>
<svg class="abs" style="left:1438px;top:55px" width="17" height="17" viewBox="0 0 17 17"><path d="M2.5 3.5h12M2.5 6.5h12M2.5 9.5h12M2.5 12.5h12" stroke="#CED0D6" stroke-width="1.3"/></svg>
<svg class="abs" style="left:1465px;top:55px" width="18" height="17" viewBox="0 0 18 17"><path d="M1.5 3.5h5M1.5 6.5h5M1.5 9.5h5M1.5 12.5h5" stroke="#CED0D6" stroke-width="1.3"/><rect x="9.5" y="2.5" width="6.5" height="12" rx="1.5" fill="none" stroke="#CED0D6" stroke-width="1.3"/></svg>
<svg class="abs" style="left:1493px;top:55px" width="17" height="17" viewBox="0 0 17 17"><rect x="1.5" y="1.5" width="14" height="14" rx="1.5" fill="none" stroke="#CED0D6" stroke-width="1.4"/><path d="M1.5 8.5L5 6.5L15 14.5" fill="none" stroke="#CED0D6" stroke-width="1.4"/><circle cx="11" cy="5.5" r="1.8" fill="none" stroke="#CED0D6" stroke-width="1.3"/></svg>
<div class="abs" style="left:1519px;top:52px;width:1px;height:22px;background:#393B40"></div>
<svg class="abs" style="left:1533px;top:55px" width="8" height="17" viewBox="0 0 8 17"><circle cx="4" cy="2.8" r="1.3" fill="#CED0D6"/><circle cx="4" cy="8.5" r="1.3" fill="#CED0D6"/><circle cx="4" cy="14.2" r="1.3" fill="#CED0D6"/></svg>
<svg class="abs" style="left:1427px;top:91px" width="15" height="14" viewBox="0 0 15 14"><path d="M7.5 1L14.5 13.5H.5z" fill="#BDA475"/><path d="M7.5 5.2v4.3" stroke="#1E1F22" stroke-width="1.6"/><circle cx="7.5" cy="11.4" r=".9" fill="#1E1F22"/></svg>
<div class="abs" style="left:1444px;top:89.5px;font-size:14.5px;line-height:20px;color:#D0D2D6;-webkit-text-stroke:0.3px currentColor">26</div>
<svg class="abs" style="left:1467px;top:91px" width="16" height="17" viewBox="0 0 16 17"><path d="M1.5 7l4 4.5L14.5 1.5" fill="none" stroke="#6FA573" stroke-width="1.7"/><path d="M2 15l1.5-1.5 1.5 1.5 1.5-1.5 1.5 1.5 1.5-1.5 1.5 1.5" fill="none" stroke="#6FA573" stroke-width="1.1"/></svg>
<div class="abs" style="left:1484.5px;top:89.5px;font-size:14.5px;letter-spacing:-0.8px;line-height:20px;color:#D0D2D6;-webkit-text-stroke:0.3px currentColor">197</div>
<svg class="abs" style="left:1516px;top:95px" width="11" height="7" viewBox="0 0 11 7"><path d="M1 5.5l4.5-4.5 4.5 4.5" fill="none" stroke="#A8ABB0" stroke-width="1.2"/></svg>
<svg class="abs" style="left:1539px;top:95px" width="11" height="7" viewBox="0 0 11 7"><path d="M1 1.5l4.5 4.5 4.5-4.5" fill="none" stroke="#A8ABB0" stroke-width="1.2"/></svg>
<div class="abs" style="left:1536.5px;top:147px;width:2.5px;height:36px;background:repeating-linear-gradient(#55647C 0 6px, transparent 6px 9px)"></div>
<div class="abs" style="left:1536.5px;top:220px;width:2.5px;height:106px;background:repeating-linear-gradient(#55647C 0 6px, transparent 6px 9px)"></div>
<div class="abs" style="left:1536.5px;top:337px;width:2.5px;height:38px;background:repeating-linear-gradient(#55647C 0 6px, transparent 6px 9px)"></div>
<div class="abs" style="left:1536.5px;top:391px;width:2.5px;height:5px;background:repeating-linear-gradient(#55647C 0 6px, transparent 6px 9px)"></div>
<div class="abs" style="left:1536.5px;top:417px;width:2.5px;height:4px;background:repeating-linear-gradient(#55647C 0 6px, transparent 6px 9px)"></div>
<div class="abs" style="left:1536.5px;top:449px;width:2.5px;height:5px;background:repeating-linear-gradient(#55647C 0 6px, transparent 6px 9px)"></div>
<div class="abs" style="left:1537px;top:896px;width:2px;height:6px;background:#8A8D93"></div>
<div class="abs" style="left:1546px;top:667px;width:8px;height:42px;border-radius:4px;background:#4A4C50"></div>
<div class="abs" style="left:325px;top:939px;width:1232px;height:1px;background:#2B2D30"></div>
<div class="abs" style="left:14px;top:978px;width:9px;height:10px;border:1.5px solid #5A8AE8;background:#2E4470;border-radius:2px"></div>
<div class="abs" style="left:28px;top:973px;font-size:15.8px;line-height:22px;color:#B4B8BF;-webkit-text-stroke:0.2px currentColor">crmSystem</div>
<svg class="abs" style="left:117px;top:977px" width="7" height="10" viewBox="0 0 7 10"><path d="M1.5 1l4 4-4 4" fill="none" stroke="#8C8F94" stroke-width="1.2"/></svg>
<svg class="abs" style="left:212px;top:977px" width="7" height="10" viewBox="0 0 7 10"><path d="M1.5 1l4 4-4 4" fill="none" stroke="#8C8F94" stroke-width="1.2"/></svg>
<svg class="abs" style="left:275px;top:977px" width="7" height="10" viewBox="0 0 7 10"><path d="M1.5 1l4 4-4 4" fill="none" stroke="#8C8F94" stroke-width="1.2"/></svg>
<div class="abs" style="left:132px;top:973px;font-size:15.8px;line-height:22px;color:#B4B8BF;-webkit-text-stroke:0.2px currentColor">templates</div>
<div class="abs" style="left:227px;top:973px;font-size:15.8px;line-height:22px;color:#B4B8BF;-webkit-text-stroke:0.2px currentColor">leads</div>
<svg class="abs" style="left:291px;top:975px" width="17" height="14" viewBox="0 0 17 14"><path d="M5.5 3L2 7l3.5 4M11.5 3L15 7l-3.5 4" fill="none" stroke="#6A9A6E" stroke-width="1.2"/></svg>
<div class="abs" style="left:312px;top:973px;font-size:15.8px;line-height:22px;color:#B4B8BF;-webkit-text-stroke:0.2px currentColor">add_new_lead.html</div>
<div class="abs" style="left:1033px;top:973px;font-size:15.8px;line-height:22px;color:#B4B8BF;-webkit-text-stroke:0.2px currentColor;letter-spacing:-0.8px">1:1</div>
<svg class="abs" style="left:1068px;top:975px" width="17" height="16" viewBox="0 0 17 16"><path d="M1.5 8.5C3.5 4.5 7 3.5 10 4.5M15.5 6.5C13.5 11.5 8.5 12.5 5.5 11.5M3.5 10.5C6 6.5 11 5.5 14 7.5M13.5 5.5C11 9.5 6 10.5 2.5 8.5M2.5 14.5L14 2" fill="none" stroke="#B4B8BF" stroke-width="1.4" stroke-linecap="round"/></svg>
<div class="abs" style="left:1101px;top:973px;font-size:15.8px;line-height:22px;color:#B4B8BF;-webkit-text-stroke:0.2px currentColor">LF</div>
<div class="abs" style="left:1135px;top:973px;font-size:15.8px;line-height:22px;color:#B4B8BF;-webkit-text-stroke:0.2px currentColor">UTF-8</div>
<div class="abs" style="left:1198px;top:973px;font-size:15.8px;line-height:22px;color:#B4B8BF;-webkit-text-stroke:0.2px currentColor">4 spaces</div>
<svg class="abs" style="left:1262px;top:973px" width="18" height="18" viewBox="0 0 18 18"><path d="M3 16.5V5c0-1 .6-1.6 1.6-1.6H6V2h4v1.4h1.3c1 0 1.7.6 1.7 1.6v3M9 16.5H4.6" fill="none" stroke="#B4B8BF" stroke-width="1.3"/><circle cx="12.5" cy="13" r="3.2" fill="none" stroke="#B4B8BF" stroke-width="1.3"/></svg>
<div class="abs" style="left:1295px;top:973px;font-size:15.8px;line-height:22px;color:#B4B8BF;-webkit-text-stroke:0.2px currentColor">Pipenv (crmSystem) [Python 3.12.2]</div>
<svg class="abs" style="left:1564px;top:973px" width="18" height="17" viewBox="0 0 18 17"><rect x="1.5" y="8" width="11" height="8" rx="1.5" fill="none" stroke="#B4B8BF" stroke-width="1.3"/><path d="M9.5 8V5a3 3 0 0 1 6 0v2" fill="none" stroke="#B4B8BF" stroke-width="1.3"/></svg>

</body></html>
